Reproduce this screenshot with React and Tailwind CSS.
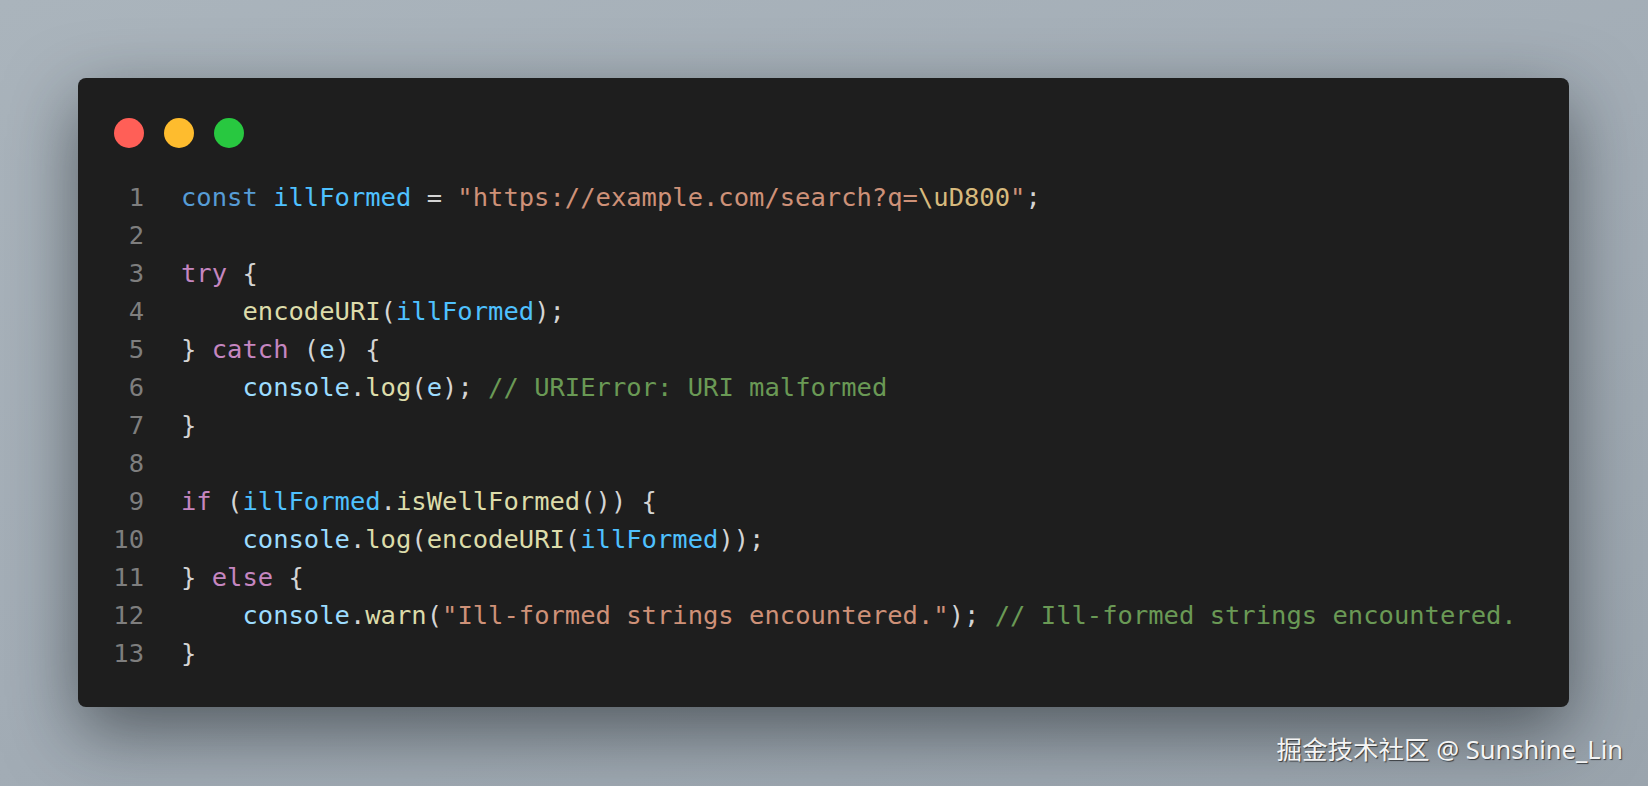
const C = {
  kw: 'text-[#569cd6]',
  ctl: 'text-[#c586c0]',
  v: 'text-[#4fc1ff]',
  obj: 'text-[#9cdcfe]',
  fn: 'text-[#dcdcaa]',
  str: 'text-[#ce9178]',
  esc: 'text-[#d7ba7d]',
  cm: 'text-[#6a9955]',
  p: 'text-[#d4d4d4]',
};

const lines = [
  [[C.kw, 'const '], [C.v, 'illFormed'], [C.p, ' = '], [C.str, '"https://example.com/search?q='], [C.esc, '\\uD800'], [C.str, '"'], [C.p, ';']],
  [],
  [[C.ctl, 'try'], [C.p, ' {']],
  [[C.p, '    '], [C.fn, 'encodeURI'], [C.p, '('], [C.v, 'illFormed'], [C.p, ');']],
  [[C.p, '} '], [C.ctl, 'catch'], [C.p, ' ('], [C.obj, 'e'], [C.p, ') {']],
  [[C.p, '    '], [C.obj, 'console'], [C.p, '.'], [C.fn, 'log'], [C.p, '('], [C.obj, 'e'], [C.p, '); '], [C.cm, '// URIError: URI malformed']],
  [[C.p, '}']],
  [],
  [[C.ctl, 'if'], [C.p, ' ('], [C.v, 'illFormed'], [C.p, '.'], [C.fn, 'isWellFormed'], [C.p, '()) {']],
  [[C.p, '    '], [C.obj, 'console'], [C.p, '.'], [C.fn, 'log'], [C.p, '('], [C.fn, 'encodeURI'], [C.p, '('], [C.v, 'illFormed'], [C.p, '));']],
  [[C.p, '} '], [C.ctl, 'else'], [C.p, ' {']],
  [[C.p, '    '], [C.obj, 'console'], [C.p, '.'], [C.fn, 'warn'], [C.p, '('], [C.str, '"Ill-formed strings encountered."'], [C.p, '); '], [C.cm, '// Ill-formed strings encountered.']],
  [[C.p, '}']],
];

export default function App() {
  return (
    <div className="w-[1648px] h-[786px] overflow-hidden bg-[linear-gradient(160deg,#aab4bc_0%,#a3adb6_50%,#9aa4ad_100%)] pt-[78px] pl-[78px]">
      <div className="w-[1491px] h-[629px] rounded-[8px] bg-[#1e1e1e] shadow-[0_24px_70px_rgba(20,25,30,0.55)] pt-[40px] pl-[36px]">
        <div className="flex gap-[20px]">
          <span className="w-[30px] h-[30px] rounded-full bg-[#ff5f57]" />
          <span className="w-[30px] h-[30px] rounded-full bg-[#febc2e]" />
          <span className="w-[30px] h-[30px] rounded-full bg-[#28c840]" />
        </div>
        <div className="mt-[30px] font-['DejaVu_Sans_Mono',monospace] text-[25.5px] leading-[38px] whitespace-pre">
          {lines.map((toks, i) => (
            <div key={i} className="flex h-[38px]">
              <span className="w-[31px] -ml-[1px] text-right text-[#7e7e7e]">{i + 1}</span>
              <span className="ml-[37px]">
                {toks.map(([cls, t], j) => (
                  <span key={j} className={cls}>{t}</span>
                ))}
              </span>
            </div>
          ))}
        </div>
      </div>
      <div className="flex justify-end pr-[25px] mt-[25px]">
        <span className="font-['Noto_Sans','Noto_Sans_CJK_SC',sans-serif] text-[25.5px] leading-[34px] text-[#f4f4f4] [text-shadow:1px_1px_1px_rgba(0,0,0,0.6)]">
          掘金技术社区 @ Sunshine_Lin
        </span>
      </div>
    </div>
  );
}
